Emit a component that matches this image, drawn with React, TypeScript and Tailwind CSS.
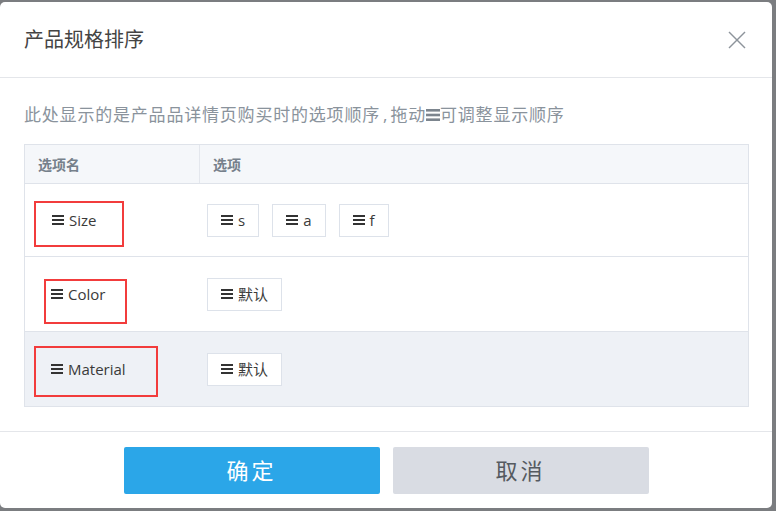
import React from "react";

const FONT = { fontFamily: '"Open Sans", "Noto Sans CJK SC", sans-serif' };

function Bars({ w = 12, h = 10, t = 2, color = "#333333" }: { w?: number; h?: number; t?: number; color?: string }) {
  const gap = (h - t) / 2;
  return (
    <svg width={w} height={h} viewBox={`0 0 ${w} ${h}`} className="shrink-0">
      <rect x="0" y="0" width={w} height={t} fill={color} />
      <rect x="0" y={gap} width={w} height={t} fill={color} />
      <rect x="0" y={gap * 2} width={w} height={t} fill={color} />
    </svg>
  );
}

function Chip({ label }: { label: string }) {
  return (
    <div className="flex h-[33px] items-center gap-[5px] border border-[#dde2ea] bg-white px-[13px] text-[15px] text-[#3a3a3a]">
      <Bars />
      <span className="leading-none">{label}</span>
    </div>
  );
}

export default function App() {
  return (
    <div className="h-[511px] w-[776px] overflow-hidden bg-[#7b7d80] pt-[2px]" style={FONT}>
      <div className="flex h-[506px] w-[772px] flex-col rounded-[5px] bg-white">
        {/* header */}
        <div className="flex h-[76px] shrink-0 items-center justify-between border-b border-[#e4e6ea] pl-[24px] pr-[26px]">
          <div className="text-[20px] text-[#444444]">产品规格排序</div>
          <svg width="18" height="18" viewBox="0 0 18 18">
            <line x1="1" y1="1" x2="17" y2="17" stroke="#8d949b" strokeWidth="1.4" />
            <line x1="17" y1="1" x2="1" y2="17" stroke="#8d949b" strokeWidth="1.4" />
          </svg>
        </div>

        {/* body */}
        <div className="flex flex-col border-b border-[#e4e6ea] pb-[24px] pl-[24px] pr-[23px] pt-[25px]">
          <div className="flex h-[24px] items-center text-[17px] tracking-[0.8px] text-[#8a939c]">
            <span>此处显示的是产品品详情页购买时的选项顺序</span>
            <span className="px-[3px] tracking-normal">,</span>
            <span>拖动</span>
            <Bars w={14} h={12} t={2.6} color="#7c858e" />
            <span>可调整显示顺序</span>
          </div>

          <div className="mt-[17px] border border-[#dfe3ea]">
            {/* table header */}
            <div className="flex h-[39px] border-b border-[#dfe3ea] bg-[#f5f7fa] text-[14px] font-bold text-[#76808b]">
              <div className="flex w-[175px] items-center border-r border-[#e4e7ed] pl-[13px]">选项名</div>
              <div className="flex items-center pl-[13px]">选项</div>
            </div>

            {/* row 1 */}
            <div className="relative flex h-[73px] border-b border-[#dfe3ea]">
              <div className="flex w-[175px] items-center gap-[5px] pl-[27px] text-[15px] text-[#3a3a3a]">
                <Bars />
                <span>Size</span>
              </div>
              <div className="flex items-center gap-[13px] pl-[7px]">
                <Chip label="s" />
                <Chip label="a" />
                <Chip label="f" />
              </div>
              <div className="pointer-events-none absolute left-[9px] top-[17px] h-[46px] w-[90px] border-2 border-[#f23c3c]" />
            </div>

            {/* row 2 */}
            <div className="relative flex h-[75px] border-b border-[#dfe3ea]">
              <div className="flex w-[175px] items-center gap-[5px] pl-[26px] text-[15px] text-[#3a3a3a]">
                <Bars />
                <span>Color</span>
              </div>
              <div className="flex items-center pl-[7px]">
                <Chip label="默认" />
              </div>
              <div className="pointer-events-none absolute left-[19px] top-[22px] h-[45px] w-[83px] border-2 border-[#f23c3c]" />
            </div>

            {/* row 3 */}
            <div className="relative flex h-[74px] bg-[#eef1f6]">
              <div className="flex w-[175px] items-center gap-[5px] pl-[26px] text-[15px] text-[#3a3a3a]">
                <Bars />
                <span>Material</span>
              </div>
              <div className="flex items-center pl-[7px]">
                <Chip label="默认" />
              </div>
              <div className="pointer-events-none absolute left-[9px] top-[14px] h-[51px] w-[124px] border-2 border-[#f23c3c]" />
            </div>
          </div>
        </div>

        {/* footer */}
        <div className="flex flex-1 items-center justify-center gap-[13px]">
          <button className="flex h-[47px] w-[256px] items-center justify-center rounded-[2px] bg-[#2ba6e8] text-[22px] tracking-[3px] text-white">
            确定
          </button>
          <button className="flex h-[47px] w-[256px] items-center justify-center rounded-[2px] bg-[#d9dce3] text-[22px] tracking-[3px] text-[#555a60]">
            取消
          </button>
        </div>
      </div>
    </div>
  );
}
